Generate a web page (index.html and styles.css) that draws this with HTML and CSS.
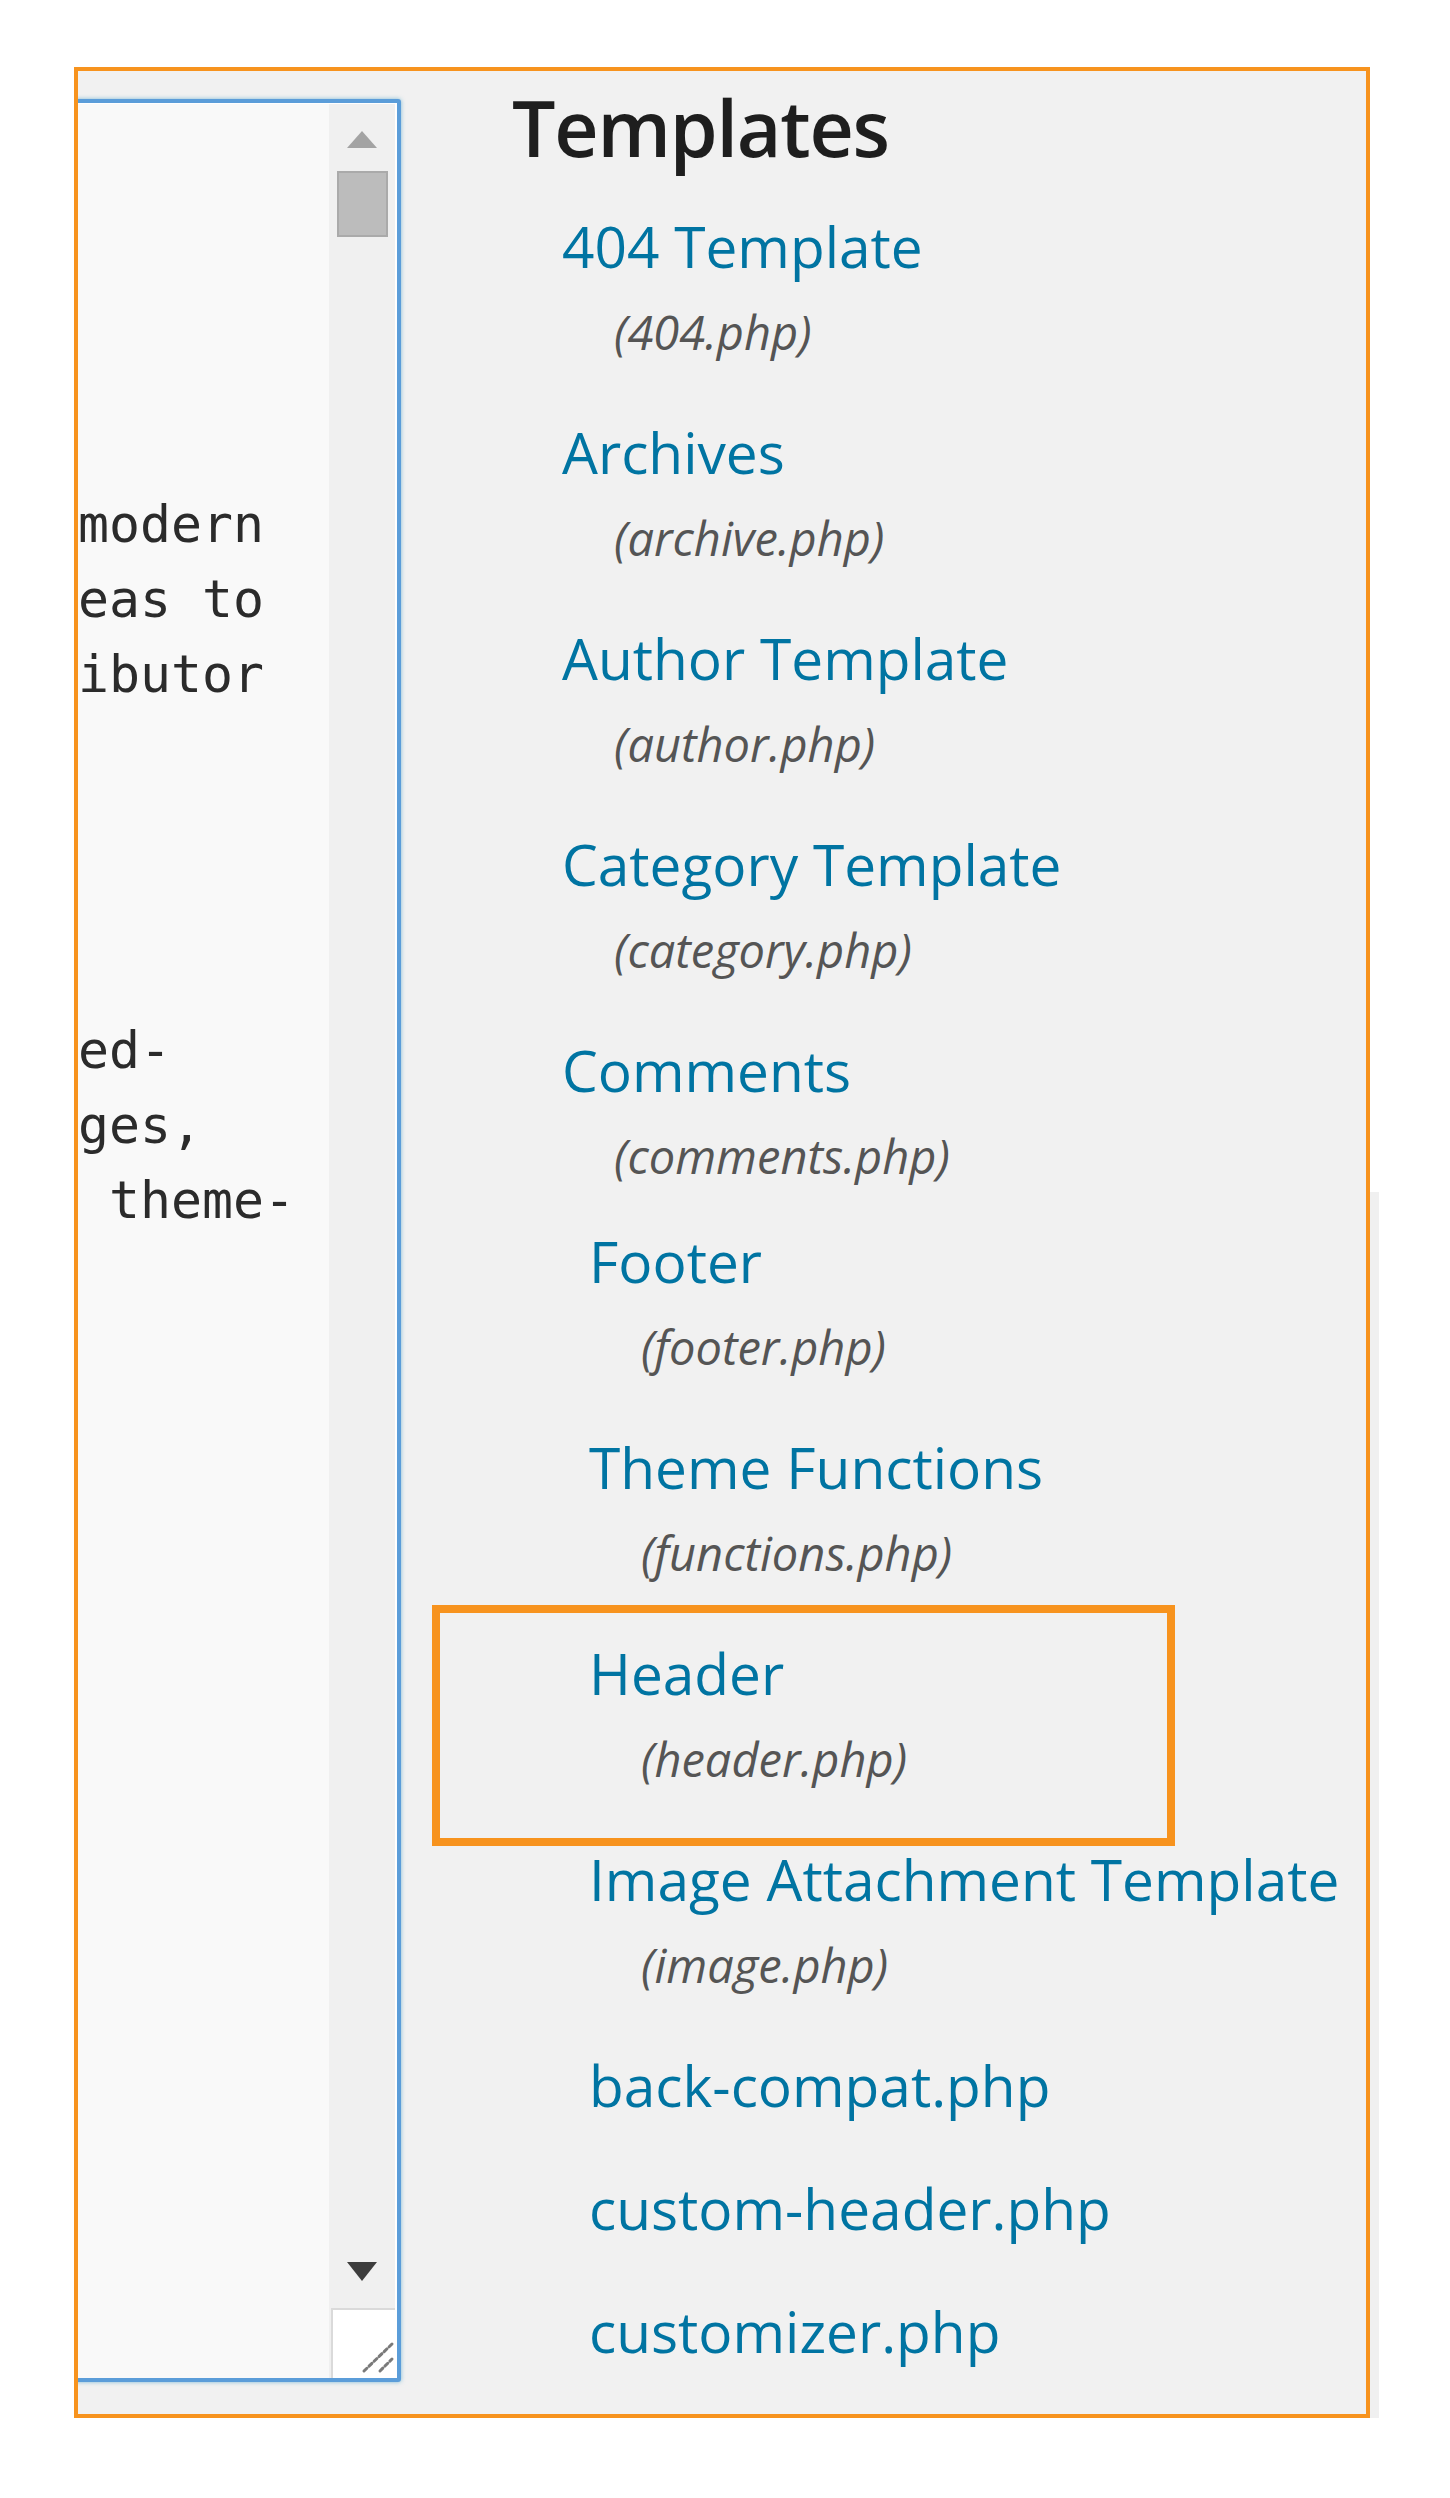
FILE: index.html
```html
<!DOCTYPE html>
<html lang="en">
<head>
<meta charset="utf-8">
<title>Edit Themes – Templates</title>
<link rel="stylesheet" href="styles.css">
</head>
<body>
<div class="stage">
  <div class="frame">
    <div class="editor">
      <div class="editor-text">
<pre class="code">

 
 
 
 
modern
eas to
ibutor
 
 
 
 
ed-
ges,
 theme-
</pre>
      </div>
      <div class="scrollbar">
        <svg class="arrow arrow-up" width="30" height="18" viewBox="0 0 30 18"><polygon points="0,18 30,18 15,1" fill="#a3a3a3"/></svg>
        <div class="thumb"></div>
        <div class="track-fill"></div>
        <svg class="arrow arrow-down" width="30" height="20" viewBox="0 0 30 20"><polygon points="0,1 30,1 15,20" fill="#3d3d3d"/></svg>
        <div class="grip">
          <svg width="62" height="68" viewBox="0 0 62 68"><line x1="31" y1="61" x2="59" y2="34" stroke="#7a7a7a" stroke-width="3" stroke-linecap="round" stroke-dasharray="4 3"/><line x1="47" y1="61" x2="59" y2="49" stroke="#7a7a7a" stroke-width="3" stroke-linecap="round" stroke-dasharray="4 3"/></svg>
        </div>
      </div>
    </div>
    <div class="sidebar">
      <h3 class="side-title">Templates</h3>
      <ul class="tpl-list">
        <li><a class="tpl-link" href="#">404 Template</a><span class="tpl-file">(404.php)</span></li>
        <li><a class="tpl-link" href="#">Archives</a><span class="tpl-file">(archive.php)</span></li>
        <li><a class="tpl-link" href="#">Author Template</a><span class="tpl-file">(author.php)</span></li>
        <li><a class="tpl-link" href="#">Category Template</a><span class="tpl-file">(category.php)</span></li>
        <li><a class="tpl-link" href="#">Comments</a><span class="tpl-file">(comments.php)</span></li>
      </ul>
      <ul class="tpl-list tpl-list-shifted">
        <li><a class="tpl-link" href="#">Footer</a><span class="tpl-file">(footer.php)</span></li>
        <li><a class="tpl-link" href="#">Theme Functions</a><span class="tpl-file">(functions.php)</span></li>
        <li class="is-marked"><a class="tpl-link" href="#">Header</a><span class="tpl-file">(header.php)</span></li>
        <li><a class="tpl-link" href="#">Image Attachment Template</a><span class="tpl-file">(image.php)</span></li>
        <li><a class="tpl-link" href="#">back-compat.php</a></li>
        <li><a class="tpl-link" href="#">custom-header.php</a></li>
        <li><a class="tpl-link" href="#">customizer.php</a></li>
      </ul>
    </div>
  </div>
  <div class="edge"><div class="edge-fill"></div></div>
</div>
</body>
</html>
```
FILE: styles.css
```css
html, body {
  margin: 0;
  padding: 0;
  background: #ffffff;
}

.stage {
  display: flex;
  align-items: stretch;
  padding: 67px 0 0 74px;
}

.frame {
  width: 1296px;
  box-sizing: border-box;
  border: 4px solid #f7931e;
  background: #f1f1f1;
  display: flex;
  align-items: flex-start;
  overflow: hidden;
}

/* ---------- code editor (textarea) ---------- */
.editor {
  flex: 0 0 auto;
  width: 363px;
  height: 2283px;
  margin: 28px 0 32px -40px;
  box-sizing: border-box;
  border: 4px solid #5b9dd9;
  border-radius: 3px;
  box-shadow: 0 0 4px rgba(30, 140, 190, 0.55);
  background: #ffffff;
  padding-top: 1px;
  display: flex;
}

.editor-text {
  flex: 1 1 auto;
  background: #f9f9f9;
  overflow: hidden;
}

.code {
  margin: 0;
  padding: 6.6px 0 0 36px;
  font-family: "DejaVu Sans Mono", "Liberation Mono", monospace;
  font-size: 51.5px;
  line-height: 75.2px;
  color: #2b2b2b;
  white-space: pre;
}

.scrollbar {
  flex: 0 0 66px;
  width: 66px;
  background: #f0f0f0;
  border-right: 2px solid #ffffff;
  display: flex;
  flex-direction: column;
  align-items: center;
}

.arrow {
  display: block;
  flex: 0 0 auto;
}

.arrow-up {
  margin-top: 26px;
}

.thumb {
  flex: 0 0 auto;
  margin-top: 23px;
  width: 51px;
  height: 66px;
  box-sizing: border-box;
  background: #bcbcbc;
  border: 2px solid #aaaaaa;
}

.track-fill {
  flex: 1 1 auto;
}

.arrow-down {
  margin-bottom: 27px;
}

.grip {
  flex: 0 0 auto;
  align-self: flex-end;
  width: 64px;
  height: 70px;
  box-sizing: border-box;
  background: #ffffff;
  border-left: 2px solid #dadada;
  border-top: 2px solid #dadada;
}

.grip svg {
  display: block;
}

/* ---------- template list ---------- */
.sidebar {
  flex: 1 1 auto;
  margin-left: 111px;
  padding-top: 7px;
  font-family: "Open Sans", "Liberation Sans", sans-serif;
}

.side-title {
  margin: 0;
  font-size: 77px;
  line-height: 100px;
  font-weight: 600;
  letter-spacing: -1.2px;
  color: #1e1e1e;
}

.tpl-list {
  list-style: none;
  margin: 28px 0 0;
  padding: 0 0 0 50px;
}

.tpl-list li {
  margin: 0 0 43px;
}

.tpl-list li:last-child {
  margin-bottom: 0;
}

.tpl-list-shifted {
  margin-top: 0;
  padding-top: 28px;
  padding-left: 77px;
}

.tpl-link {
  display: block;
  font-size: 56.8px;
  line-height: 80px;
  color: #0074a2;
  text-decoration: none;
  white-space: nowrap;
}

.tpl-file {
  display: block;
  padding: 10px 0 0 52px;
  font-size: 47px;
  line-height: 73px;
  font-style: italic;
  color: #555555;
  white-space: nowrap;
}

.is-marked {
  position: relative;
}

.is-marked::before {
  content: "";
  position: absolute;
  left: -157px;
  top: -28px;
  width: 743px;
  height: 241px;
  box-sizing: border-box;
  border: 8px solid #f7931e;
  pointer-events: none;
}

/* stitched strip outside the frame */
.edge {
  flex: 0 0 9px;
  width: 9px;
  display: flex;
  flex-direction: column;
}

.edge-fill {
  margin-top: 1125px;
  flex: 1 1 auto;
  background: #f0f0f0;
}
```
